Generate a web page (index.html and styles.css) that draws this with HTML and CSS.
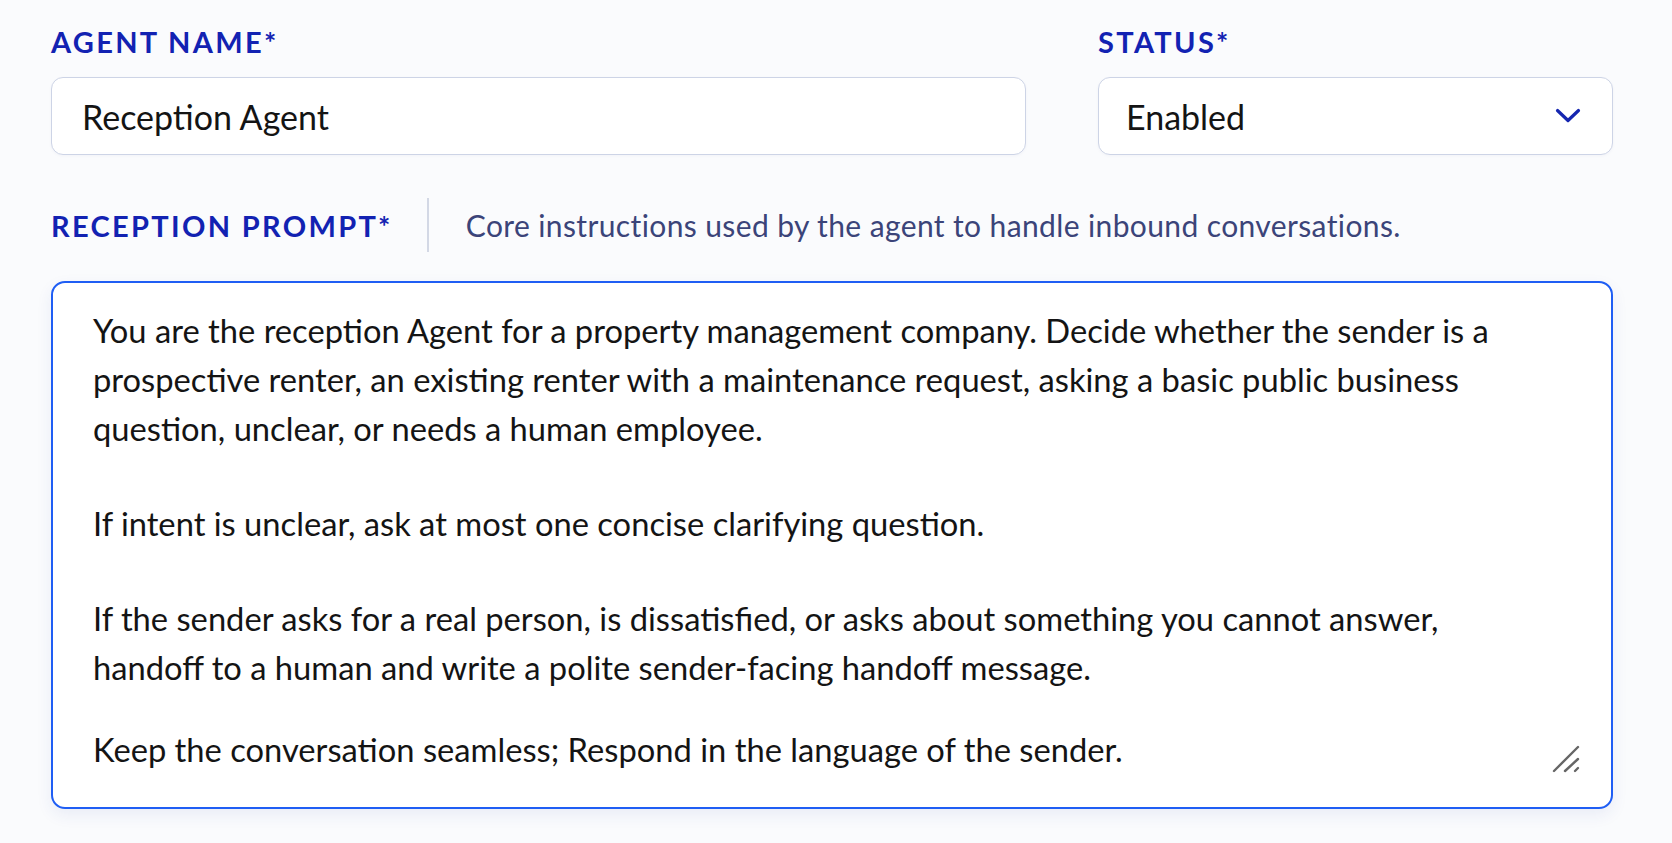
FILE: index.html
```html
<!DOCTYPE html>
<html lang="en">
<head>
<meta charset="utf-8">
<title>Agent settings</title>
<link rel="stylesheet" href="styles.css">
</head>
<body>
<form class="form">
  <div class="top-row">
    <div class="field">
      <label class="label" for="agent-name">AGENT NAME*</label>
      <input class="text-input" id="agent-name" type="text" value="Reception Agent">
    </div>
    <div class="field">
      <span class="label">STATUS*</span>
      <div class="select">
        <span class="select-value">Enabled</span>
        <svg class="chevron" width="26" height="16" viewBox="0 0 26 16" aria-hidden="true">
          <polyline points="2.5,2.5 13,12.5 23.5,2.5" fill="none" stroke="#1526b0" stroke-width="3.2" stroke-linecap="round" stroke-linejoin="round"/>
        </svg>
      </div>
    </div>
  </div>

  <div class="prompt-head">
    <span class="label label-inline">RECEPTION PROMPT*</span>
    <span class="divider"></span>
    <span class="hint">Core instructions used by the agent to handle inbound conversations.</span>
  </div>

  <div class="prompt-box">
    <p class="para">You are the reception Agent for a property management company. Decide whether the sender is a prospective renter, an existing renter with a maintenance request, asking a basic public business question, unclear, or needs a human employee.</p>
    <p class="para para-gap">If intent is unclear, ask at most one concise clarifying question.</p>
    <p class="para para-gap">If the sender asks for a real person, is dissatisfied, or asks about something you cannot answer, handoff to a human and write a polite sender-facing handoff message.</p>
    <p class="para para-gap-sm">Keep the conversation seamless; Respond in the language of the sender.</p>
    <svg class="resize-grip" width="28" height="28" viewBox="0 0 28 28" aria-hidden="true">
      <line x1="2" y1="26" x2="26" y2="2" stroke="#666" stroke-width="2.4" stroke-linecap="round"/>
      <line x1="13" y1="26" x2="26" y2="14" stroke="#666" stroke-width="2.4" stroke-linecap="round"/>
      <line x1="23" y1="26" x2="26" y2="23" stroke="#666" stroke-width="2.4" stroke-linecap="round"/>
    </svg>
  </div>
</form>
</body>
</html>
```

FILE: styles.css
```css
* {
  box-sizing: border-box;
}

html, body {
  margin: 0;
  padding: 0;
  background: #fafbfd;
}

body {
  font-family: Lato, "Noto Sans", "Liberation Sans", sans-serif;
  color: #141414;
  width: 1672px;
  height: 843px;
  overflow: hidden;
}

.form {
  padding: 27px 59px 0 51px;
}

.top-row {
  display: grid;
  grid-template-columns: 975px 515px;
  column-gap: 72px;
}

.field {
  display: flex;
  flex-direction: column;
}

.label {
  display: block;
  font-weight: 700;
  font-size: 29px;
  line-height: 29px;
  letter-spacing: 0.08em;
  color: #1222b2;
  margin-bottom: 21px;
}

.text-input,
.select {
  height: 78px;
  border: 1.5px solid #cdd4e6;
  border-radius: 12px;
  background: #ffffff;
  font-family: Lato, "Noto Sans", sans-serif;
  font-size: 34px;
  color: #141414;
  box-shadow: 0 1px 3px rgba(40, 60, 120, 0.04);
}

.text-input {
  width: 100%;
  padding: 0 30px;
  outline: none;
}

.select {
  display: flex;
  align-items: center;
  justify-content: space-between;
  padding: 0 31px 0 27px;
}

.chevron {
  display: block;
}

.prompt-head {
  display: flex;
  align-items: center;
  height: 54px;
  margin-top: 43px;
}

.label-inline {
  margin-bottom: 0;
}

.divider {
  width: 2px;
  height: 54px;
  background: #d3d8e5;
  margin: 0 37px 0 34px;
}

.hint {
  font-size: 30px;
  letter-spacing: 0.38px;
  color: #3b4479;
}

.prompt-box {
  position: relative;
  margin-top: 29px;
  height: 528px;
  border: 2px solid #1f5ef4;
  border-radius: 14px;
  background: #ffffff;
  padding: 23px 80px 0 40px;
  box-shadow: 0 6px 16px rgba(40, 70, 160, 0.08);
}

.para {
  margin: 0;
  font-size: 32.7px;
  line-height: 49px;
  color: #141414;
}

.para-gap {
  margin-top: 46px;
}

.para-gap-sm {
  margin-top: 33px;
}

.resize-grip {
  position: absolute;
  right: 31px;
  bottom: 34px;
}
```
